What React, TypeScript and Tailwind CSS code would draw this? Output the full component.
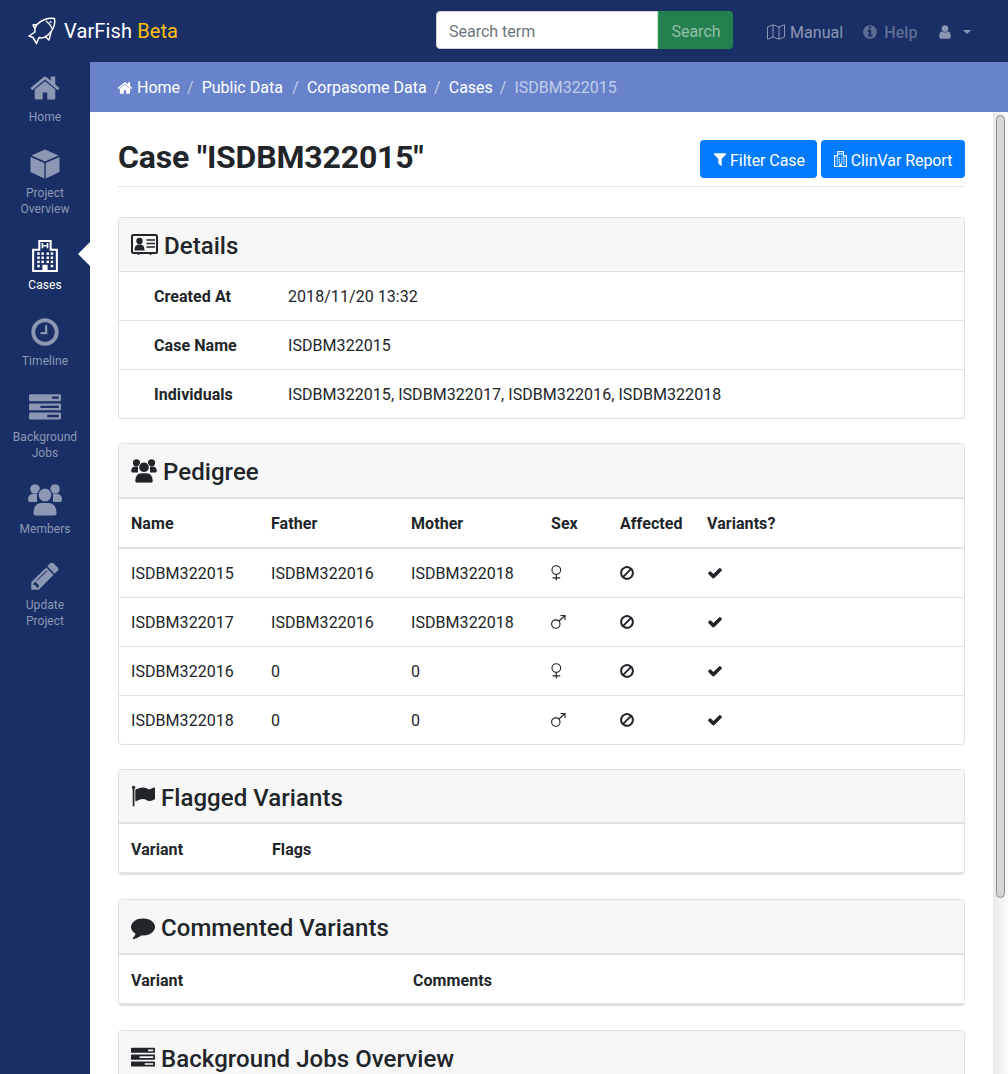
import React from "react";

const P = {
  home: "M1472 992v480q0 26-19 45t-45 19h-384v-384h-256v384h-384q-26 0-45-19t-19-45v-480q0-1 .5-3t.5-3l575-474 575 474q1 2 1 6zm223-69l-62 74q-8 9-21 11h-3q-13 0-21-7l-692-577-692 577q-12 8-24 7-13-2-21-11l-62-74q-8-10-7-22.500t11-21.500l719-599q32-26 76-26t76 26l244 204v-195q0-14 9-23t23-9h192q14 0 23 9t9 23v408l219 182q10 8 11 21.500t-7 22.500z",
  pencil: "M491 1536l91-91-235-235-91 91v107h128v128h107zm523-928q0-22-22-22-10 0-17 7l-542 542q-7 7-7 17 0 22 22 22 10 0 17-7l542-542q7-7 7-17zm-54-192l416 416-832 832h-416v-416zm683 96q0 53-37 90l-166 166-416-416 166-165q36-38 90-38 53 0 91 38l235 234q37 39 37 91z",
  clock: "M1024 544v448q0 14-9 23t-23 9h-320q-14 0-23-9t-9-23v-64q0-14 9-23t23-9h224v-352q0-14 9-23t23-9h64q14 0 23 9t9 23zm416 352q0-148-73-273t-198-198-273-73-273 73-198 198-73 273 73 273 198 198 273 73 273-73 198-198 73-273zm224 0q0 209-103 385.500t-279.500 279.500-385.500 103-385.500-103-279.500-279.500-103-385.500 103-385.500 279.500-279.500 385.500-103 385.500 103 279.500 279.500 103 385.500z",
  tasks: "M1024 1408h640v-128h-640v128zm-384-512h1024v-128h-1024v128zm640-512h384v-128h-384v128zm512 832v256q0 26-19 45t-45 19h-1664q-26 0-45-19t-19-45v-256q0-26 19-45t45-19h1664q26 0 45 19t19 45zm0-512v256q0 26-19 45t-45 19h-1664q-26 0-45-19t-19-45v-256q0-26 19-45t45-19h1664q26 0 45 19t19 45zm0-512v256q0 26-19 45t-45 19h-1664q-26 0-45-19t-19-45v-256q0-26 19-45t45-19h1664q26 0 45 19t19 45z",
  ban: "M1440 893q0-161-87-295l-754 753q137 89 297 89 111 0 211.500-43.500t173.500-116.500 116-174.500 43-212.500zm-999 299l755-754q-135-91-300-91-148 0-273 73t-198 199-73 274q0 162 89 299zm1223-299q0 157-61 300t-163.500 246-245 164-298.500 61-298.500-61-245-164-163.500-246-61-300 61-299.500 163.500-245.500 245-164 298.500-61 298.500 61 245 164 163.500 245.500 61 299.500z",
  check: "M1671 566q0 40-28 68l-724 724-136 136q-28 28-68 28t-68-28l-136-136-362-362q-28-28-28-68t28-68l136-136q28-28 68-28t68 28l294 295 656-657q28-28 68-28t68 28l136 136q28 28 28 68z",
  filter: "M1595 295q17 41-14 70l-493 493v742q0 42-39 59-13 5-25 5-27 0-45-19l-256-256q-19-19-19-45v-486l-493-493q-31-29-14-70 17-39 59-39h1280q42 0 59 39z",
  info: "M1152 1376v-160q0-14-9-23t-23-9h-96v-512q0-14-9-23t-23-9h-320q-14 0-23 9t-9 23v160q0 14 9 23t23 9h96v320h-96q-14 0-23 9t-9 23v160q0 14 9 23t23 9h448q14 0 23-9t9-23zm-128-896v-160q0-14-9-23t-23-9h-192q-14 0-23 9t-9 23v160q0 14 9 23t23 9h192q14 0 23-9t9-23zm640 416q0 209-103 385.500t-279.500 279.500-385.500 103-385.500-103-279.500-279.500-103-385.500 103-385.500 279.500-279.500 385.500-103 385.500 103 279.500 279.500 103 385.500z",
  user: "M1536 1399q0 109-62.500 187t-150.500 78h-854q-88 0-150.500-78t-62.500-187q0-85 8.500-160.500t31.500-152 58.500-131 94-89 134.500-34.500q131 128 313 128t313-128q76 0 134.500 34.500t94 89 58.500 131 31.500 152 8.500 160.500zm-256-887q0 159-112.500 271.500t-271.500 112.500-271.500-112.500-112.500-271.500 112.500-271.500 271.500-112.500 271.500 112.500 112.500 271.500z",
  comment: "M1792 896q0 174-120 321.500t-326 233-450 85.500q-70 0-145-8-198 175-460 242-49 14-114 22-17 2-30.500-9t-17.500-29v-1q-3-4-.5-12t2-10 4.500-9.500l6-9 7-8.500 8-9q7-8 31-34.500t34.500-38 31-39.500 32.500-51 27-59 26-76q-157-89-247.500-220t-90.500-281q0-130 71-248.500t191-204.500 286-136.500 348-50.500q244 0 450 85.500t326 233 120 321.500z",
  flag: "M320 256q0 72-64 110v1266q0 13-9.500 22.500t-22.500 9.500h-64q-13 0-22.500-9.500t-9.500-22.500v-1266q-64-38-64-110 0-53 37.500-90.500t90.500-37.500 90.500 37.500 37.500 90.500zm1472 64v763q0 25-12.500 38.500t-39.500 27.500q-215 116-369 116-61 0-123.500-22t-108.500-48-115.500-48-142.500-22q-192 0-464 146-17 9-33 9-26 0-45-19t-19-45v-742q0-32 31-55 21-14 79-43 236-120 421-120 107 0 200 29t219 88q38 19 88 19 54 0 117.500-21t110-47 88-47 54.500-21q26 0 45 19t19 45z",
};

function Fa({ d, size }: { d: string; size: number }) {
  return (
    <svg width={size} height={size} viewBox="0 0 1792 1792" fill="currentColor" className="shrink-0">
      <path d={d} />
    </svg>
  );
}

function Fish() {
  return (
    <svg width="28" height="28" viewBox="0 0 28 28" fill="none" stroke="white" strokeWidth="1.5" strokeLinejoin="round" className="shrink-0 mr-2">
      <path d="M26.5 1.5 C20 0.5 13 3 9 7.5 C7 10 6.5 12 7 15 L1 19 L5 20.5 L8.500 26.500 L11 20.500 C14 21.500 18 20 21 17 C25 13 27.500 8 26.500 1.500 Z" />
      <path d="M9 7.500 L5 8 L7 12" />
      <path d="M17 19.500 L21 23 L23 15" />
      <path d="M18 4 C21 6 23 9 24.500 12" />
      <circle cx="22.500" cy="5" r="1" fill="white" stroke="none" />
    </svg>
  );
}

function Cube() {
  return (
    <svg width="30" height="30" viewBox="0 0 30 30" fill="currentColor">
      <path d="M15 .5 L28.500 6.500 L15 12.500 L1.500 6.500 Z" />
      <path d="M.5 8 L14.300 14 V29.500 L.5 23 Z" />
      <path d="M29.500 8 L15.700 14 V29.500 L29.500 23 Z" />
    </svg>
  );
}

function Hospital({ w, h, bw = 2 }: { w: number; h: number; bw?: number }) {
  return (
    <svg width={w} height={h} viewBox="0 0 25 31" fill="none" stroke="currentColor" className="shrink-0">
      <path strokeWidth={bw} d="M1 9.500 H7 V1 H18 V9.500 H24 V30 H1 Z" />
      <path strokeWidth="1.500" d="M10 3 V8 M15 3 V8 M10 5.500 H15" />
      <g fill="currentColor" stroke="none">
        {[5, 9, 14, 18].map((x) => [12, 16, 20].map((y) => <rect key={`${x}-${y}`} x={x} y={y} width="2.400" height="2.400" />))}
        <rect x="5" y="24" width="2.400" height="2.400" />
        <rect x="18" y="24" width="2.400" height="2.400" />
        <rect x="10" y="24" width="5" height="6" />
      </g>
    </svg>
  );
}

function People({ w, h, gap }: { w: number; h: number; gap: string }) {
  return (
    <svg width={w} height={h} viewBox="0 0 34 32" fill="currentColor" className="shrink-0">
      <circle cx="7" cy="5" r="4.800" />
      <circle cx="27" cy="5" r="4.800" />
      <path d="M0 16 C0 12 2 10 5 10 H9 V18 H3 C1 18 0 17.500 0 16 Z" />
      <path d="M34 16 C34 12 32 10 29 10 H25 V18 H31 C33 18 34 17.500 34 16 Z" />
      <circle cx="17" cy="11" r="7" stroke={gap} strokeWidth="1.200" />
      <path d="M5 29 C5 23 8 19 13 18.500 H21 C26 19 29 23 29 29 C29 31 28 32 26 32 H8 C6 32 5 31 5 29 Z" stroke={gap} strokeWidth="1" />
    </svg>
  );
}

function IdCard() {
  return (
    <svg width="27" height="21" viewBox="0 0 27 21" fill="none" stroke="currentColor" className="shrink-0">
      <rect x="1" y="1" width="25" height="18" rx="1.500" strokeWidth="2" />
      <circle cx="8.500" cy="7" r="3.200" fill="currentColor" stroke="none" />
      <path d="M3.500 16.500 C3.500 12 5.500 10.500 8.500 10.500 C11.500 10.500 13.500 12 13.500 16.500 Z" fill="currentColor" stroke="none" />
      <path strokeWidth="1.600" d="M15.500 6 H24 M15.500 9.500 H24 M15.500 13 H24" />
      <path strokeWidth="1.600" d="M7.500 19 V21 M19.500 19 V21" />
    </svg>
  );
}

function Venus() {
  return (
    <svg width="12" height="16" viewBox="0 0 12 16" fill="none" stroke="currentColor" strokeWidth="1.150" className="shrink-0">
      <circle cx="5.300" cy="5" r="4.300" />
      <path d="M5.300 9.500 V15.500 M1.500 12.800 H9.200" />
    </svg>
  );
}

function Mars() {
  return (
    <svg width="15" height="16" viewBox="0 0 15 16" fill="none" stroke="currentColor" strokeWidth="1.150" className="shrink-0">
      <circle cx="4.800" cy="10" r="4.200" />
      <path d="M8 7 L14 1.500 M9.500 1.500 H14 V6" />
    </svg>
  );
}

function MapIcon() {
  return (
    <svg width="18" height="16" viewBox="0 0 18 16" fill="none" stroke="currentColor" strokeWidth="1" strokeLinejoin="round" className="shrink-0">
      <path d="M.5 3 L6 .8 L12 3 L17.500 .8 V13 L12 15.200 L6 13 L.5 15.200 Z M6 .8 V13 M12 3 V15.200" />
    </svg>
  );
}

function NavItem({ icon, label, active, two }: { icon: React.ReactNode; label: React.ReactNode; active?: boolean; two?: boolean }) {
  return (
    <a className={`relative flex flex-col items-center pt-[10px] text-xs leading-4 text-center ${two ? "h-[92px]" : "h-[76px]"} ${active ? "text-white" : "text-[#8c97b3]"}`}>
      <div className="h-[32px] flex items-center justify-center">{icon}</div>
      <div className="w-[78px] mt-[5px]">{label}</div>
      {active && <span className="absolute right-0 top-[12px] border-y-[12px] border-r-[12px] border-y-transparent border-r-white" />}
    </a>
  );
}

function Card({ icon, title, head = "h-[53px]", titlePad = "pt-[2px]", gap = "gap-[6px]", children }: { icon: React.ReactNode; title: string; head?: string; titlePad?: string; gap?: string; children: React.ReactNode }) {
  return (
    <div className="border border-black/[.125] rounded mb-[24px] overflow-hidden">
      <div className={`bg-[#f7f7f7] px-3 flex items-center text-2xl font-medium text-[#212529] ${head} ${gap}`}>
        {icon}
        <span className={titlePad}>{title}</span>
      </div>
      {children}
    </div>
  );
}

const ped = [
  ["ISDBM322015", "ISDBM322016", "ISDBM322018", "f"],
  ["ISDBM322017", "ISDBM322016", "ISDBM322018", "m"],
  ["ISDBM322016", "0", "0", "f"],
  ["ISDBM322018", "0", "0", "m"],
];

const Sep = () => <span className="mx-2 text-white/60">/</span>;

export default function App() {
  return (
    <div className="font-['Roboto',sans-serif] tracking-[0.06px] h-[1074px] w-[1008px] flex flex-col overflow-hidden text-base text-[#212529]">
      <header className="h-[62px] shrink-0 bg-[#192f66] flex items-center pl-7">
        <Fish />
        <div className="text-xl text-white tracking-[0.12px] w-[114px] shrink-0 whitespace-nowrap">VarFish <span className="text-[#ffc107]">Beta</span></div>
        <div className="ml-[258px] flex h-[38px] mb-[2px] shrink-0 tracking-normal">
          <div className="w-[222px] bg-white rounded-l border border-[#ced4da] pl-3 pt-[3px] flex items-center text-[#6c757d]">Search term</div>
          <div className="w-[75px] bg-[#24804f] border-l border-[#28a745] rounded-r pt-[3px] flex items-center justify-center text-white/50">Search</div>
        </div>
        <div className="ml-[34px] flex items-center gap-[5px] pt-[2px] text-[#8c97b3]"><MapIcon /><span className="pt-[2px]">Manual</span></div>
        <div className="ml-[19px] flex items-center gap-[6px] pt-[2px] text-[#5e6d94] font-medium"><Fa d={P.info} size={16} /><span className="pt-[2px]">Help</span></div>
        <div className="ml-[19px] flex items-center pt-[2px] text-[#8c97b3]">
          <Fa d={P.user} size={16} />
          <span className="ml-[10px] border-x-[4.800px] border-t-[4.800px] border-x-transparent border-t-[#8c97b3]" />
        </div>
      </header>
      <div className="flex-1 flex min-h-0">
        <nav className="w-[90px] shrink-0 bg-[#192f66]">
          <NavItem icon={<Fa d={P.home} size={32} />} label="Home" />
          <NavItem two icon={<Cube />} label={<>Project<br />Overview</>} />
          <NavItem active icon={<Hospital w={26} h={32} />} label="Cases" />
          <NavItem icon={<Fa d={P.clock} size={32} />} label="Timeline" />
          <NavItem two icon={<Fa d={P.tasks} size={32} />} label={<>Background<br />Jobs</>} />
          <NavItem icon={<People w={34} h={32} gap="#192f66" />} label="Members" />
          <NavItem two icon={<Fa d={P.pencil} size={32} />} label={<>Update<br />Project</>} />
        </nav>
        <div className="flex-1 min-w-0 flex flex-col">
          <div className="h-[50px] shrink-0 bg-[#6883cc] pl-7 pt-[2px] flex items-center text-white whitespace-nowrap tracking-normal">
            <span className="mr-1 -ml-px"><Fa d={P.home} size={16} /></span> <span className="-mr-px">Home</span>
            <Sep /> <span className="mr-[1.500px]">Public Data</span>
            <Sep /> <span className="-mr-[0.500px]">Corpasome Data</span>
            <Sep /> <span className="-mr-px">Cases</span>
            <Sep /> <span className="text-white/60">ISDBM322015</span>
          </div>
          <div className="flex-1 flex min-h-0">
            <main className="flex-1 min-w-0 overflow-hidden px-7 pt-7">
              <div className="flex items-center justify-between h-[47px] border-b border-black/10 mb-[30px] pb-2">
                <h1 className="text-[32px] font-bold tracking-[-0.17px] pb-[4px]">Case "ISDBM322015"</h1>
                <div className="flex gap-1 tracking-[-0.06px]">
                  <a className="h-[38px] w-[117px] bg-[#007bff] text-white rounded flex items-center justify-center gap-[2px]"><Fa d={P.filter} size={16} /><span className="pt-[3px]">Filter Case</span></a>
                  <a className="h-[38px] w-[144px] bg-[#007bff] text-white rounded flex items-center justify-center gap-[4px]"><Hospital w={13} h={16} bw={2.200} /><span className="pt-[3px]">ClinVar Report</span></a>
                </div>
              </div>
              <Card icon={<IdCard />} title="Details">
                {[["Created At", "2018/11/20 13:32"], ["Case Name", "ISDBM322015"], ["Individuals", "ISDBM322015, ISDBM322017, ISDBM322016, ISDBM322018"]].map(([k, v]) => (
                  <div key={k} className="flex h-[49px] border-t border-[#dee2e6] items-center pl-[35px] pt-[2px]">
                    <div className="w-[134px] font-bold">{k}</div>
                    <div>{v}</div>
                  </div>
                ))}
              </Card>
              <Card icon={<People w={26} h={24} gap="#f7f7f7" />} title="Pedigree">
                <div className="flex h-[50px] border-t-2 border-[#dee2e6] items-center px-3 pt-[2px] font-bold">
                  <div className="w-[140px]">Name</div><div className="w-[140px]">Father</div><div className="w-[140px]">Mother</div><div className="w-[69px]">Sex</div><div className="w-[87px]">Affected</div><div>Variants?</div>
                </div>
                {ped.map((r, i) => (
                  <div key={i} className={`flex border-[#dee2e6] items-center px-3 pt-[2px] ${i === 0 ? "h-[50px] border-t-2" : "h-[49px] border-t"}`}>
                    <div className="w-[140px]">{r[0]}</div><div className="w-[140px]">{r[1]}</div><div className="w-[140px]">{r[2]}</div>
                    <div className="w-[69px] -mt-[2px]">{r[3] === "f" ? <Venus /> : <Mars />}</div>
                    <div className="w-[87px] -mt-[2px]"><span className="block -ml-px w-4"><Fa d={P.ban} size={16} /></span></div>
                    <div className="-mt-[2px]"><Fa d={P.check} size={16} /></div>
                  </div>
                ))}
              </Card>
              <Card icon={<Fa d={P.flag} size={24} />} title="Flagged Variants" head="h-[52px]" titlePad="pt-[3px]">
                <div className="flex h-[52px] border-y-2 border-[#dee2e6] items-center px-3 pt-[3px] font-bold">
                  <div className="w-[141px]">Variant</div><div>Flags</div>
                </div>
              </Card>
              <Card icon={<Fa d={P.comment} size={24} />} title="Commented Variants" titlePad="pt-[3px]">
                <div className="flex h-[52px] border-y-2 border-[#dee2e6] items-center px-3 pt-[3px] font-bold">
                  <div className="w-[282px]">Variant</div><div>Comments</div>
                </div>
              </Card>
              <Card icon={<Fa d={P.tasks} size={24} />} title="Background Jobs Overview">
                <div className="h-[150px] border-t-2 border-[#dee2e6]" />
              </Card>
            </main>
            <div className="w-[15px] shrink-0 bg-gradient-to-r from-[#e9e9e9] to-[#fafafa] pt-[3px] pl-[3px]">
              <div className="w-[9px] h-[783px] rounded-full bg-[#d6d6d6] border border-[#8c8c8c]" />
            </div>
          </div>
        </div>
      </div>
    </div>
  );
}
